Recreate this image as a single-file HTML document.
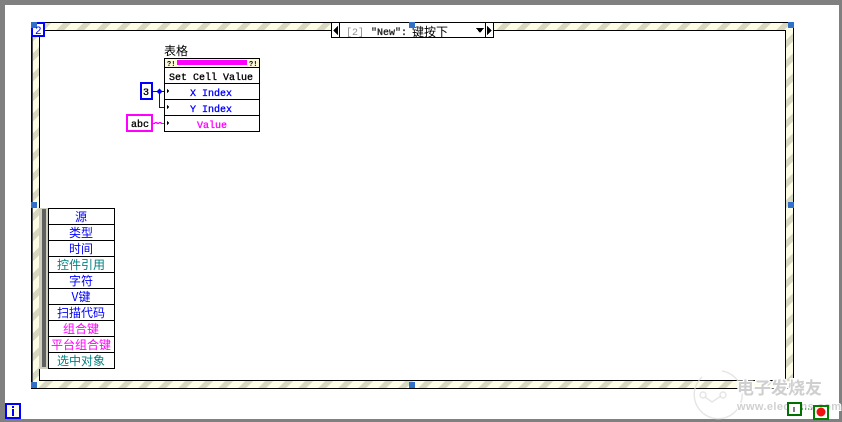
<!DOCTYPE html>
<html>
<head>
<meta charset="utf-8">
<style>
html,body{margin:0;padding:0;background:#fff}
body{width:842px;height:422px;overflow:hidden;position:relative}
svg{position:absolute;left:0;top:0}
text{font-family:"Liberation Mono","WenQuanYi Zen Hei","Noto Sans CJK SC",monospace;font-size:10px}
.c{font-family:"WenQuanYi Zen Hei","Noto Sans CJK SC",sans-serif;font-size:12px;text-anchor:middle}
.b{stroke-width:.3px}
</style>
</head>
<body>
<svg width="842" height="422" viewBox="0 0 842 422" shape-rendering="crispEdges">
<defs>
<pattern id="st" width="20" height="20" patternUnits="userSpaceOnUse">
<rect width="20" height="20" fill="#fdfde6"/>
<polygon points="6,20 14,20 34,0 26,0" fill="#d8d8c2"/>
<polygon points="-14,20 -6,20 14,0 6,0" fill="#d8d8c2"/>
</pattern>
</defs>
<!-- window border -->
<rect width="842" height="422" fill="#808080"/>
<rect x="5" y="5" width="834" height="414" fill="#fff"/>

<!-- structure frame -->
<rect x="31" y="22" width="763" height="367" fill="url(#st)"/>
<rect x="31.500" y="22.500" width="762" height="366" fill="none" stroke="#000"/>
<rect x="32" y="23" width="1" height="365" fill="#555"/>
<rect x="39.500" y="30.500" width="746" height="350" fill="#fff" stroke="#000"/>

<!-- selector -->
<rect x="331.500" y="22.500" width="162" height="15" fill="#fff" stroke="#000"/>
<line x1="339.500" y1="22" x2="339.500" y2="38" stroke="#000"/>
<line x1="485.500" y1="22" x2="485.500" y2="38" stroke="#000"/>
<polygon points="338,26 338,35 333,30.500" fill="#000"/>
<polygon points="487,26 487,35 492,30.500" fill="#000"/>
<polygon points="476,28 484,28 480,33" fill="#000"/>
<text x="346" y="35" fill="#909090">[2]</text>
<text class="b" x="371" y="35" fill="#222" stroke="#222">"New":</text>
<text x="412" y="36" style="font-family:'WenQuanYi Zen Hei','Noto Sans CJK SC',sans-serif;font-size:12px" fill="#000">键按下</text>

<!-- handles -->
<g fill="#3070c8">
<rect x="409" y="22" width="6" height="6"/>
<rect x="788" y="22" width="6" height="6"/>
<rect x="31" y="202" width="6" height="6"/>
<rect x="788" y="202" width="6" height="6"/>
<rect x="31" y="382" width="6" height="6"/>
<rect x="409" y="382" width="6" height="6"/>
<rect x="788" y="382" width="6" height="6"/>
</g>

<!-- sequence index box -->
<rect x="32" y="23" width="12" height="13" fill="#fff" stroke="#0000ff" stroke-width="2"/>
<rect x="31" y="22" width="6" height="6" fill="#3070c8"/>
<text x="35" y="34" fill="#0000ff" style="font-size:11px">2</text>

<!-- label -->
<text x="164" y="55" style="font-family:'WenQuanYi Zen Hei','Noto Sans CJK SC',sans-serif;font-size:12px" fill="#000">表格</text>

<!-- property node -->
<rect x="164.500" y="58.500" width="95" height="73" fill="#fff" stroke="#000"/>
<rect x="165" y="59" width="94" height="8" fill="#fcf8d8"/>
<rect x="177" y="60" width="70" height="5" fill="#ff00ff"/>
<text x="167" y="66" style="font-size:7px;font-weight:bold" fill="#000">?!</text>
<text x="249" y="66" style="font-size:7px;font-weight:bold" fill="#000">?!</text>
<g stroke="#000">
<line x1="164" y1="67.500" x2="260" y2="67.500"/>
<line x1="164" y1="83.500" x2="260" y2="83.500"/>
<line x1="164" y1="99.500" x2="260" y2="99.500"/>
<line x1="164" y1="115.500" x2="260" y2="115.500"/>
</g>
<text class="b" x="169" y="80" fill="#000" stroke="#000">Set Cell Value</text>
<text class="b" x="190" y="96" fill="#0000ff" stroke="#0000ff">X Index</text>
<text class="b" x="190" y="112" fill="#0000ff" stroke="#0000ff">Y Index</text>
<text class="b" x="197" y="128" fill="#ff00ff" stroke="#ff00ff">Value</text>
<g fill="#000">
<polygon points="167,89 167,93 169,91"/>
<polygon points="167,105 167,109 169,107"/>
<polygon points="167,121 167,125 169,123"/>
</g>

<!-- constants -->
<rect x="141" y="83" width="11" height="16" fill="#fff" stroke="#0000ff" stroke-width="2"/>
<text class="b" x="143" y="95" fill="#000" stroke="#000">3</text>
<rect x="127" y="115" width="25" height="16" fill="#fff" stroke="#ff00ff" stroke-width="2"/>
<text class="b" x="131" y="127" fill="#000" stroke="#000">abc</text>

<!-- wires -->
<path d="M153 91.500H164M159.500 91V107.500H164" fill="none" stroke="#0000ff"/>
<polygon points="159.500,88.500 162.500,91.500 159.500,94.500 156.500,91.500" fill="#0000ff" shape-rendering="auto"/>
<path d="M153 123.500h2v-1h2v1h2v-1h2v1h3" fill="none" stroke="#ff00ff"/>

<!-- event data cluster -->
<rect x="39" y="208" width="9" height="161" fill="#d0d0be"/>
<rect x="42" y="209" width="4" height="158" fill="#606060"/>
<rect x="48.500" y="208.500" width="66" height="160" fill="#fff" stroke="#000"/>
<g stroke="#000">
<line x1="48" y1="224.500" x2="115" y2="224.500"/>
<line x1="48" y1="240.500" x2="115" y2="240.500"/>
<line x1="48" y1="256.500" x2="115" y2="256.500"/>
<line x1="48" y1="272.500" x2="115" y2="272.500"/>
<line x1="48" y1="288.500" x2="115" y2="288.500"/>
<line x1="48" y1="304.500" x2="115" y2="304.500"/>
<line x1="48" y1="320.500" x2="115" y2="320.500"/>
<line x1="48" y1="336.500" x2="115" y2="336.500"/>
<line x1="48" y1="352.500" x2="115" y2="352.500"/>
</g>
<text class="c" x="81" y="221" fill="#0000ff">源</text>
<text class="c" x="81" y="237" fill="#0000ff">类型</text>
<text class="c" x="81" y="253" fill="#0000ff">时间</text>
<text class="c" x="81" y="269" fill="#008080">控件引用</text>
<text class="c" x="81" y="285" fill="#0000ff">字符</text>
<text class="c" x="81" y="301" fill="#0000ff">V键</text>
<text class="c" x="81" y="317" fill="#0000ff">扫描代码</text>
<text class="c" x="81" y="333" fill="#ff00ff">组合键</text>
<text class="c" x="81" y="349" fill="#ff00ff">平台组合键</text>
<text class="c" x="81" y="365" fill="#008080">选中对象</text>

<!-- loop iteration terminal -->
<rect x="6" y="404" width="14" height="14" fill="#fdfde6" stroke="#0000ff" stroke-width="2"/>
<rect x="12" y="406" width="2" height="2" fill="#0000ff"/>
<rect x="12" y="409" width="2" height="7" fill="#0000ff"/>
</svg>
<svg width="842" height="422" viewBox="0 0 842 422">
<!-- watermark -->
<g fill="none" stroke="#dcdcdc" stroke-opacity=".7" stroke-width="1.500">
<path d="M722 371a24 24 0 1 1-20 6"/>
<circle cx="703" cy="395" r="3"/>
<circle cx="723" cy="395" r="3"/>
<path d="M705 397l7 5 9-6"/>
</g>
<text x="737" y="394" style="font-family:'WenQuanYi Zen Hei','Noto Sans CJK SC',sans-serif;font-size:17px;font-weight:bold;paint-order:stroke;stroke:#fff;stroke-width:3px" fill="#cfcfcf">电子发烧友</text>
<text x="737" y="410" style="font-family:'Liberation Sans',sans-serif;font-size:11px;font-weight:bold;letter-spacing:.4px;paint-order:stroke;stroke:#fff;stroke-width:2px" fill="#d0d0d0">www.elecfans.com</text>
<!-- condition + stop -->
<g shape-rendering="crispEdges">
<rect x="788" y="403" width="13" height="12" fill="#fff" stroke="#007000" stroke-width="2"/>
<rect x="793" y="407" width="2" height="5" fill="#808080"/>
<path d="M802 409h11" stroke="#008000" stroke-dasharray="1 2" fill="none"/>
<rect x="814" y="406" width="14" height="13" fill="#fff" stroke="#008000" stroke-width="2"/>
</g>
<circle cx="821" cy="412" r="4.500" fill="#f01010"/>
</svg>
</body>
</html>
